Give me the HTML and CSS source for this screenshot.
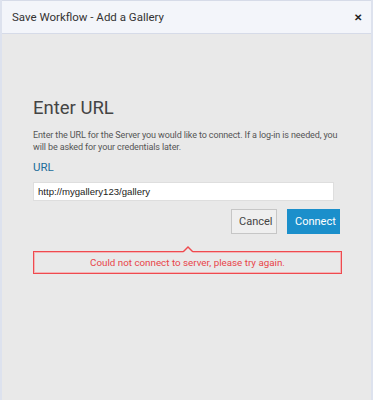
FILE: index.html
```html
<!DOCTYPE html>
<html lang="en">
<head>
    <meta charset="UTF-8">
    <meta name="viewport" content="width=device-width, initial-scale=1.0">
    <title>Save Workflow - Add a Gallery</title>
    <link rel="stylesheet" href="styles.css">
</head>
<body>
    <div class="dialog">
        <div class="dialog-header">
            <span class="dialog-title">Save Workflow - Add a Gallery</span>
            <span class="close-btn">&#x2715;</span>
        </div>
        <div class="dialog-body">
            <h1>Enter URL</h1>
            <p class="description">Enter the URL for the Server you would like to connect. If a log-in is needed, you will be asked for your credentials later.</p>
            <label class="field-label" for="galleryUrl">URL</label>
            <input type="text" id="galleryUrl" class="url-input" value="http://mygallery123/gallery">
            <div class="actions">
                <button type="button" class="btn btn-cancel">Cancel</button>
                <button type="button" class="btn btn-connect">Connect</button>
            </div>
            <div class="error-box">Could not connect to server, please try again.</div>
        </div>
    </div>
</body>
</html>
```

FILE: styles.css
```css
body {
    margin: 0;
    background: #fff;
    font-family: Roboto, "Open Sans", sans-serif;
}
.dialog {
    height: 400px;
    box-sizing: border-box;
    background: #e9e9e9;
    border-left: 2px solid #dde2ee;
    border-right: 2px solid #dde2ee;
}
.dialog-header {
    height: 34px;
    box-sizing: border-box;
    display: flex;
    align-items: center;
    justify-content: space-between;
    padding: 0 9px 0 10px;
    background: #f3f5fa;
    border-top: 1px solid #d6dbe8;
    border-bottom: 1px solid #d6dbe8;
}
.dialog-title {
    font-size: 11.5px;
    color: #333;
}
.close-btn {
    font-size: 10px;
    font-weight: bold;
    color: #222;
}
.dialog-body {
    padding: 63px 30px 0 31px;
}
h1 {
    margin: 0 0 10px;
    font-size: 18.5px;
    font-weight: normal;
    color: #444;
}
.description {
    margin: 0 0 7px;
    font-size: 9px;
    letter-spacing: -0.12px;
    line-height: 12px;
    color: #555;
}
.field-label {
    display: block;
    font-size: 11.5px;
    color: #1c6d9a;
    margin-bottom: 8px;
}
.url-input {
    display: block;
    width: 301px;
    height: 19px;
    box-sizing: border-box;
    margin: 0;
    padding: 0 4px;
    border: 1px solid #dedede;
    background: #fff;
    font-family: "Liberation Sans", Arial, sans-serif;
    font-size: 9.6px;
    color: #222;
}
.actions {
    display: flex;
    justify-content: flex-end;
    gap: 10px;
    margin-top: 8px;
    padding-right: 1px;
}
.btn {
    height: 25px;
    box-sizing: border-box;
    font-family: Roboto, "Open Sans", sans-serif;
    font-size: 11px;
    padding: 0 7px;
    cursor: pointer;
}
.btn-cancel {
    width: 46px;
    background: #efefef;
    border: 1px solid #c6c6c6;
    color: #444;
}
.btn-connect {
    width: 53px;
    background: #1b8fcb;
    border: 1px solid #1b8fcb;
    color: #fff;
}
.error-box {
    position: relative;
    margin-top: 17px;
    width: 309px;
    height: 23px;
    box-sizing: border-box;
    border: 1px solid #ef4a4f;
    box-shadow: inset 0 0 0 1px #f3b5b7;
    text-align: center;
    font-size: 9.8px;
    line-height: 21px;
    color: #e8454a;
}
.error-box::before,
.error-box::after {
    content: "";
    position: absolute;
    width: 0;
    height: 0;
}
.error-box::before {
    top: -6px;
    left: 148px;
    border-left: 6px solid transparent;
    border-right: 6px solid transparent;
    border-bottom: 6px solid #ef4a4f;
}
.error-box::after {
    top: -4px;
    left: 149px;
    border-left: 5px solid transparent;
    border-right: 5px solid transparent;
    border-bottom: 5px solid #e9e9e9;
}
```
